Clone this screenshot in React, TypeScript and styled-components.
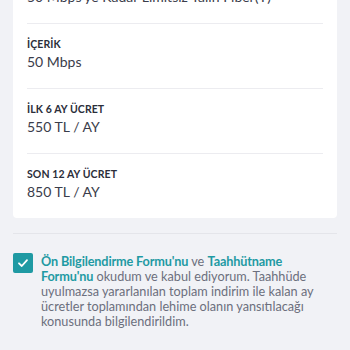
import React from "react";
import styled, { createGlobalStyle } from "styled-components";

const Global = createGlobalStyle`
  html, body { margin: 0; padding: 0; background: #f1f2f6; }
  body { font-family: Lato, "Noto Sans", sans-serif; overflow: hidden; }
`;

const Page = styled.div`
  width: 350px;
  height: 350px;
  box-sizing: border-box;
  padding: 0 13px;
  background: #f1f2f6;
  overflow: hidden;
`;

const Card = styled.div`
  margin-top: -29px;
  background: #ffffff;
  border-radius: 4px;
  padding: 16px 14px 0;
`;

const Row = styled.div<{ $first?: boolean; $last?: boolean }>`
  display: flex;
  flex-direction: column;
  padding: ${(p) => (p.$first ? "0 0 16px" : "13px 0 16px")};
  border-bottom: ${(p) => (p.$last ? "none" : "1px solid #ececf0")};
`;

const Label = styled.div`
  font-size: 10.5px;
  line-height: 14px;
  font-weight: 700;
  color: #2b2e3a;
  letter-spacing: 0.1px;
  margin-bottom: 1px;
`;

const Value = styled.div`
  font-size: 14px;
  line-height: 20px;
  color: #3a3d4a;
`;

const Separator = styled.div`
  margin-top: 15px;
  height: 1px;
  background: #e4e5ea;
`;

const Consent = styled.div`
  display: flex;
  align-items: flex-start;
  gap: 8px;
  margin-top: 19px;
`;

const Box = styled.div`
  flex: 0 0 20px;
  width: 20px;
  height: 20px;
  border-radius: 2px;
  background: #1f9aa3;
  display: flex;
  align-items: center;
  justify-content: center;
`;

const Text = styled.p`
  margin: 1px 0 0;
  font-size: 12.7px;
  line-height: 15px;
  color: #6c6f7d;
`;

const Link = styled.span`
  color: #1f9aa3;
  font-weight: 700;
  letter-spacing: -0.15px;
`;

type Item = { label?: string; value: string };

const items: Item[] = [
  { value: "50 Mbps'ye Kadar Limitsiz Yalın Fiber(Y)" },
  { label: "İÇERİK", value: "50 Mbps" },
  { label: "İLK 6 AY ÜCRET", value: "550 TL / AY" },
  { label: "SON 12 AY ÜCRET", value: "850 TL / AY" },
];

export default function App() {
  return (
    <Page>
      <Global />
      <Card>
        {items.map((it, i) => (
          <Row key={i} $first={i === 0} $last={i === items.length - 1}>
            {it.label && <Label>{it.label}</Label>}
            <Value>{it.value}</Value>
          </Row>
        ))}
      </Card>
      <Separator />
      <Consent>
        <Box>
          <svg width="12" height="12" viewBox="0 0 12 12" fill="none">
            <path d="M2 6.3 L4.8 9 L10 3.2" stroke="#fff" strokeWidth="1.8" strokeLinecap="round" strokeLinejoin="round" />
          </svg>
        </Box>
        <Text>
          <Link>Ön Bilgilendirme Formu'nu</Link> ve <Link>Taahhütname Formu'nu</Link> okudum ve kabul ediyorum. Taahhüde uyulmazsa yararlanılan toplam indirim ile kalan ay ücretler toplamından lehime olanın yansıtılacağı konusunda bilgilendirildim.
        </Text>
      </Consent>
    </Page>
  );
}
